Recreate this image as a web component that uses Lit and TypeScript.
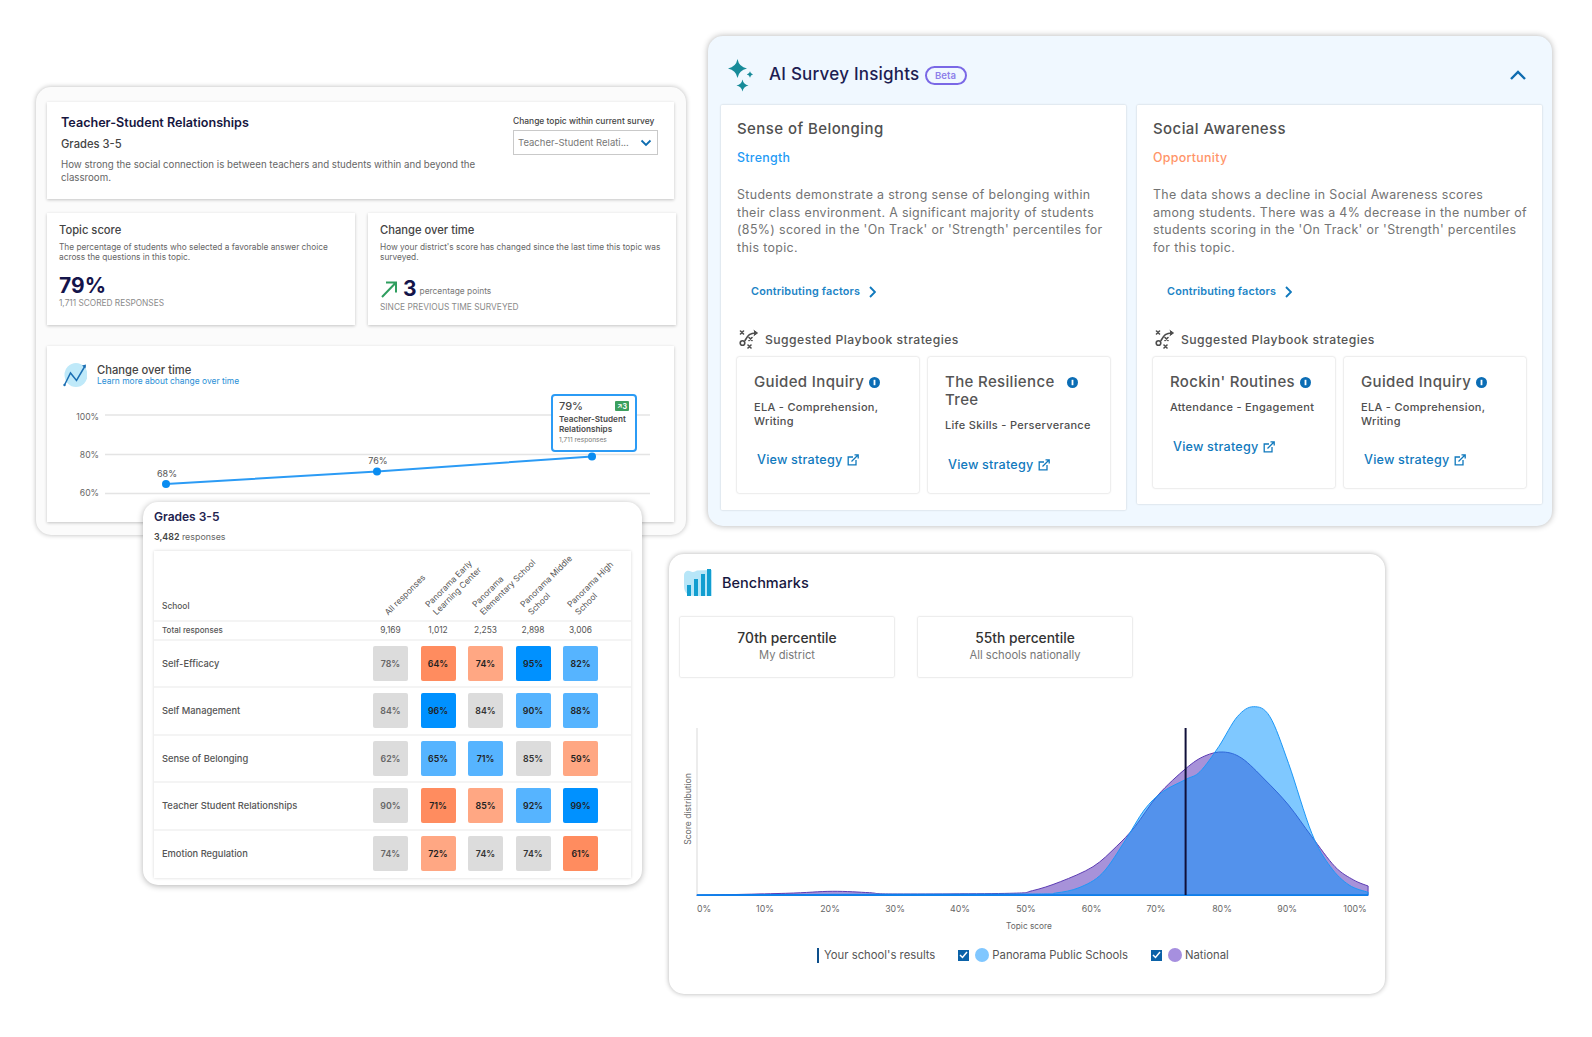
import { LitElement, html, css, svg } from "lit";
import { customElement } from "lit/decorators.js";

// Catmull-Rom smoothing of points into a cubic path
function smooth(pts: number[][]): string {
  let d = `M${pts[0][0]} ${pts[0][1]}`;
  for (let i = 0; i < pts.length - 1; i++) {
    const p0 = pts[Math.max(i - 1, 0)], p1 = pts[i], p2 = pts[i + 1], p3 = pts[Math.min(i + 2, pts.length - 1)];
    const c1x = p1[0] + (p2[0] - p0[0]) / 6, c1y = p1[1] + (p2[1] - p0[1]) / 6;
    const c2x = p2[0] - (p3[0] - p1[0]) / 6, c2y = p2[1] - (p3[1] - p1[1]) / 6;
    d += ` C${c1x.toFixed(1)} ${c1y.toFixed(1)} ${c2x.toFixed(1)} ${c2y.toFixed(1)} ${p2[0].toFixed(1)} ${p2[1].toFixed(1)}`;
  }
  return d;
}
const toPage = (a: number[][]) => a.map(([x, y]) => [660 + x / 2.148, 550 + y / 3]);
const bluePts = toPage([[79,1035],[400,1033],[800,1032],[850,1029],[900,1013],[950,970],[1000,870],[1040,780],[1080,725],[1130,688],[1160,665],[1200,590],[1240,500],[1275,470],[1310,500],[1350,640],[1400,850],[1440,950],[1480,1005],[1521,1027]]);
const purplePts = toPage([[79,1036],[270,1030],[370,1024],[450,1028],[500,1032],[750,1030],[800,1022],[860,995],[930,950],[980,890],[1020,830],[1070,735],[1130,655],[1170,618],[1210,606],[1250,625],[1300,690],[1350,765],[1400,860],[1450,950],[1490,990],[1521,1008]]);
const close = (d: string) => d + ` L1368 895.5 L697 895.5 Z`;

const star = (cx: number, cy: number, r: number) => {
  const k = r * 0.16;
  return `M${cx} ${cy - r}Q${cx + k} ${cy - k} ${cx + r} ${cy}Q${cx + k} ${cy + k} ${cx} ${cy + r}Q${cx - k} ${cy + k} ${cx - r} ${cy}Q${cx - k} ${cy - k} ${cx} ${cy - r}Z`;
};

const playbookIcon = html`<svg class="pb" width="20" height="20" viewBox="0 0 20 20" fill="none" stroke="#4d4d4d" stroke-width="1.6" stroke-linecap="round">
  <path d="M1.5 2l3 3M4.5 2l-3 3M10 8.5l3 3M13 8.5l-3 3M9 16l3 3M12 16l-3 3"/>
  <circle cx="3.5" cy="14" r="2.3"/>
  <path d="M6 11.5C9 6 11 4 17 4"/><path d="M15 1.5L18.5 4 15 6.5" fill="#4d4d4d" stroke-width="1"/>
</svg>`;
const extIcon = html`<svg class="ext" width="12" height="12" viewBox="0 0 12 12" fill="none" stroke="#1079bd" stroke-width="1.3">
  <path d="M6 3H1.2v7.8H9V6"/><path d="M4.5 7.5L11 1M7.5 .8h3.7v3.7"/>
</svg>`;
const infoIcon = html`<svg class="info" width="11" height="11" viewBox="0 0 11 11"><circle cx="5.5" cy="5.5" r="5.5" fill="#0b6db5"/><rect x="4.6" y="2.8" width="1.8" height="5.4" fill="#fff"/></svg>`;

type Strat = { t: string; sub: string; cls: string };
const panels = [
  { cls: "p1", title: "Sense of Belonging", tag: "Strength", tagCls: "strength",
    body: ["Students demonstrate a strong sense of belonging within", "their class environment. A significant majority of students", "(85%) scored in the 'On Track' or 'Strength' percentiles for", "this topic."],
    strats: [
      { t: "Guided Inquiry", sub: "ELA - Comprehension, Writing", cls: "" },
      { t: "The Resilience Tree", sub: "Life Skills - Perserverance", cls: "wide" },
    ] as Strat[] },
  { cls: "p2", title: "Social Awareness", tag: "Opportunity", tagCls: "opp",
    body: ["The data shows a decline in Social Awareness scores", "among students. There was a 4% decrease in the number of", "students scoring in the 'On Track' or 'Strength' percentiles", "for this topic."],
    strats: [
      { t: "Rockin' Routines", sub: "Attendance - Engagement", cls: "single" },
      { t: "Guided Inquiry", sub: "ELA - Comprehension, Writing", cls: "" },
    ] as Strat[] },
];

const heads: string[][] = [["All responses"], ["Panorama Early", "Learning Center"], ["Panorama", "Elementary School"], ["Panorama Middle", "School"], ["Panorama High", "School"]];
const totals = ["9,169", "1,012", "2,253", "2,898", "3,006"];
// f first-column grey, g grey, o strong orange, l light orange, b strong blue, s soft blue
const rows: { n: string; c: [string, string][] }[] = [
  { n: "Self-Efficacy", c: [["78%","f"],["64%","o"],["74%","l"],["95%","b"],["82%","s"]] },
  { n: "Self Management", c: [["84%","f"],["96%","b"],["84%","g"],["90%","s"],["88%","s"]] },
  { n: "Sense of Belonging", c: [["62%","f"],["65%","s"],["71%","s"],["85%","g"],["59%","l"]] },
  { n: "Teacher Student Relationships", c: [["90%","f"],["71%","o"],["85%","l"],["92%","s"],["99%","b"]] },
  { n: "Emotion Regulation", c: [["74%","f"],["72%","l"],["74%","g"],["74%","g"],["61%","o"]] },
];

const xTicks: [string, number][] = [["0%",704],["10%",765],["20%",830],["30%",895],["40%",960],["50%",1026],["60%",1091.5],["70%",1156],["80%",1222],["90%",1287],["100%",1355]];

@customElement("app-root")
export class AppRoot extends LitElement {
  static styles = css`
    :host { display: block; position: relative; width: 1592px; height: 1037px; background: #fff; overflow: hidden;
      font-family: Inter, "Liberation Sans", sans-serif; color: #4d4d4d; }
    * { box-sizing: border-box; }
    svg { display: block; flex: none; }
    svg text { font-family: Inter, "Liberation Sans", sans-serif; }
    .win { position: absolute; border-radius: 15px; }

    /* Topic window */
    .topic { left: 36px; top: 87px; width: 650px; height: 448px; background: #fbfbfb; z-index: 1;
      box-shadow: 0 0 5px rgba(0,0,0,.28); padding: 15px 10px 13px 11px; display: flex; flex-direction: column; }
    .sheet { background: #fff; box-shadow: 0 1px 3px rgba(0,0,0,.22); }
    .hd { width: 627px; height: 97px; padding: 13px 16px 0 14px; display: flex; justify-content: space-between; }
    .hd-l { width: 425px; }
    .hd h2 { margin: 0; font-size: 12.6px; line-height: 15px; font-weight: 600; color: #17173f; }
    .hd h3 { margin: 6.5px 0 0; font-size: 11.2px; line-height: 15px; font-weight: 500; color: #444; }
    .hd p { margin: 6px 0 0; font-size: 9.7px; line-height: 13px; color: #666; }
    .hd-r { width: 145px; }
    .hd-r label { display: block; font-size: 8.45px; line-height: 12px; font-weight: 500; color: #444; white-space: nowrap; }
    .sel { margin-top: 3px; height: 25px; border: 1px solid #c9c9c9; display: flex; align-items: center; justify-content: space-between;
      padding: 0 5px 0 4px; font-size: 9.5px; color: #777; white-space: nowrap; }
    .duo { display: grid; grid-template-columns: 308px 308px; column-gap: 13px; margin-top: 14px; }
    .stat { height: 112px; padding: 10px 12px 0 12px; }
    .stat h4 { margin: 0; font-size: 11.2px; line-height: 14px; font-weight: 500; color: #444; }
    .stat p { margin: 5px 0 0; font-size: 8.3px; line-height: 10px; color: #666; }
    .big { margin-top: 11px; font-size: 21px; line-height: 25px; font-weight: 700; color: #14144a; }
    .cap { font-size: 8.3px; line-height: 11px; color: #8a8a8a; margin-top: 0; white-space: nowrap; }
    .delta { margin-top: 15.5px; display: flex; align-items: center; height: 24px; }
    .delta b { font-size: 21px; font-weight: 700; color: #14144a; margin-left: 5px; line-height: 24px; }
    .delta span { font-size: 8.4px; color: #777; margin: 3px 0 0 3px; }
    .delta + .cap { margin-top: 1px; font-size: 8.4px; }
    .trend { position: relative; width: 627px; height: 177px; margin-top: 21px; overflow: hidden; }
    .trend-h { display: flex; align-items: center; gap: 10px; padding: 16px 0 0 16px; height: 43px; margin-bottom: 1px; }
    .trend-h div { font-size: 11.2px; line-height: 12px; font-weight: 500; color: #444; }
    .trend-h a { display: block; font-size: 8.45px; line-height: 11px; font-weight: 400; color: #2a8fd6; }
    .tip { position: absolute; left: 504px; top: 48px; width: 86px; height: 58px; background: #fff; border: 2px solid #2b9bf5; border-radius: 4px;
      padding: 4px 6px; font-size: 8.2px; line-height: 10px; font-weight: 600; color: #4a4a4a; }
    .tip-t { display: flex; justify-content: space-between; align-items: center; font-size: 11px; font-weight: 500; line-height: 13px; margin-bottom: 1px; }
    .tip-b { display: flex; align-items: center; gap: 1px; height: 10px; padding: 0 2px; background: #3c9f5e; color: #fff; border-radius: 1px; font-size: 7px; font-weight: 700; }
    .tip small { display: block; font-size: 6.6px; font-weight: 400; color: #777; margin-top: 1px; line-height: 10px; }

    /* AI window */
    .ai { left: 708px; top: 36px; width: 844px; height: 490px; background: #f0f8ff; box-shadow: 0 0 6px rgba(0,0,0,.3); }
    .ai-h { height: 69px; display: flex; align-items: center; padding: 9px 26px 0 20px; }
    .ai-h h1 { margin: -2px 0 0 16px; font-size: 17px; font-weight: 500; letter-spacing: .22px; color: #1d1d52; white-space: nowrap; }
    .beta { margin-left: 5px; width: 42px; height: 19px; border: 2px solid #7a68e6; border-radius: 10px; font-size: 9.6px; font-weight: 600;
      color: #8e80ea; display: flex; align-items: center; justify-content: center; }
    .chev-up { margin-left: auto; }
    .panels { display: flex; align-items: flex-start; gap: 11px; padding-left: 13px; }
    .panel { width: 405px; background: #fff; box-shadow: 0 0 2px rgba(0,0,0,.22); padding: 15px 16px 0; border-radius: 1px; }
    .p1 { height: 405px; } .p2 { height: 399px; }
    .panel h3 { margin: 0; font-size: 15px; line-height: 18px; font-weight: 500; letter-spacing: .42px; color: #505050; }
    .tag { margin-top: 13px; font-size: 12.4px; line-height: 14px; font-weight: 500; letter-spacing: .3px; }
    .strength { color: #1f9bf5; } .opp { color: #ff9469; }
    .body { margin: 21px 0 0; font-size: 12.4px; line-height: 17.5px; letter-spacing: .35px; color: #737373; white-space: nowrap; }
    .cf { display: flex; align-items: center; gap: 9px; margin: 29px 0 0 14px; font-size: 10.8px; line-height: 14px; letter-spacing: .2px; font-weight: 600; color: #1c84c6; }
    .sg { display: flex; align-items: center; gap: 6px; margin: 30px 0 0 2px; height: 20px; font-size: 12.2px; font-weight: 500; letter-spacing: .45px; color: #555; }
    .strats { display: grid; grid-template-columns: 182px 182px; column-gap: 9px; margin-top: 8px; }
    .strat { background: #fff; box-shadow: 0 0 2px rgba(0,0,0,.25); padding: 16px 8px 0 17px; border-radius: 2px; }
    .p1 .strat { height: 136px; } .p2 .strat { height: 131px; }
    .st { display: flex; align-items: flex-start; gap: 5px; font-size: 15px; line-height: 18px; font-weight: 500; letter-spacing: .35px; color: #555; }
    .st .info { margin-top: 4px; }
    .wide .st span { width: 117px; }
    .ss { margin-top: 10px; font-size: 11px; line-height: 13.6px; font-weight: 500; letter-spacing: .3px; color: #4f4f4f; }
    .vs { display: flex; align-items: center; gap: 5px; margin: 24px 0 0 3px; font-size: 12.6px; line-height: 16px; font-weight: 500; letter-spacing: .2px; color: #1079bd; }

    /* Table window */
    .grades { left: 143px; top: 502px; width: 499px; height: 383px; background: #fff; z-index: 2; box-shadow: 0 1px 6px rgba(0,0,0,.3); padding: 7px 11px 0; }
    .grades h2 { margin: 0; font-size: 12px; line-height: 16px; font-weight: 600; color: #23234f; }
    .resp { margin-top: 5px; font-size: 8.9px; line-height: 13px; color: #666; } .resp b { font-weight: 600; color: #444; }
    .tbl { margin-top: 8px; width: 477px; height: 327px; box-shadow: 0 0 3px rgba(0,0,0,.16); }
    .row { display: flex; align-items: center; gap: 12.5px; padding-left: 8px; border-bottom: 2px solid #f4f4f4; }
    .row > :first-child { width: 198.5px; font-size: 9.3px; font-weight: 500; color: #555; white-space: nowrap; }
    .row > .c { width: 35px; flex: none; }
    .hrow { height: 71px; align-items: flex-end; }
    .hrow > :first-child { padding-bottom: 9px; font-size: 8.4px; }
    .hcell { position: relative; height: 100%; }
    .rot { position: absolute; left: 17px; bottom: 3px; transform-origin: left bottom; transform: rotate(-45deg); white-space: nowrap;
      font-size: 8.4px; line-height: 10.5px; color: #555; }
    .trow { height: 18.5px; }
    .trow > :first-child { font-size: 8px; }
    .trow .c { text-align: center; font-size: 8.4px; color: #555; }
    .drow { height: 47.5px; }
    .drow:last-child { border-bottom-color: transparent; }
    .cell { height: 35px; border-radius: 2px; display: flex; align-items: center; justify-content: center; font-size: 8.8px; font-weight: 600; color: #222; }
    .f { background: #dcdcdc; color: #666; } .g { background: #dcdcdc; color: #333; }
    .o { background: #ff8c5f; } .l { background: #ffa783; } .b { background: #0091ff; } .s { background: #56b4ff; }

    /* Benchmark window */
    .bench { left: 669px; top: 554px; width: 716px; height: 440px; background: #fff; box-shadow: 0 0 5px rgba(0,0,0,.3); padding: 15px 0 0 11px; }
    .bh { display: flex; align-items: center; gap: 9px; height: 27px; padding-left: 3px; font-size: 14.5px; font-weight: 500; color: #17173f; }
    .pcts { display: flex; gap: 24px; margin-top: 21px; }
    .pct { width: 214px; height: 60px; box-shadow: 0 0 2px rgba(0,0,0,.28); display: flex; flex-direction: column; align-items: center; padding-top: 13px; border-radius: 1px; }
    .pct b { font-size: 13.8px; line-height: 16px; font-weight: 500; color: #333; }
    .pct span { font-size: 11.2px; line-height: 14px; margin-top: 2px; color: #777; }
    .dist { margin: 23px 0 0 -11px; }
    .legend { display: flex; align-items: center; height: 16px; margin: 12px 0 0 137px; font-size: 11.3px; color: #555; white-space: nowrap; }
    .bar { width: 2px; height: 15px; background: #0d4f8b; margin-right: 5px; }
    .chk { width: 11px; height: 11px; background: #0b62a8; margin-left: 23px; display: flex; align-items: center; justify-content: center; }
    .dot { width: 14px; height: 14px; border-radius: 50%; margin: 0 3px 0 6px; }
  `;

  render() {
    return html`
      <section class="win topic">
        <div class="sheet hd">
          <div class="hd-l">
            <h2>Teacher-Student Relationships</h2>
            <h3>Grades 3-5</h3>
            <p>How strong the social connection is between teachers and students within and beyond the classroom.</p>
          </div>
          <div class="hd-r">
            <label>Change topic within current survey</label>
            <div class="sel"><span>Teacher-Student Relati...</span>
              <svg width="12" height="8" viewBox="0 0 12 8" fill="none" stroke="#0d6cb0" stroke-width="1.8"><path d="M1.5 1.5L6 6l4.5-4.5"/></svg></div>
          </div>
        </div>
        <div class="duo">
          <div class="sheet stat">
            <h4>Topic score</h4>
            <p>The percentage of students who selected a favorable answer choice<br>across the questions in this topic.</p>
            <div class="big">79%</div>
            <div class="cap">1,711 SCORED RESPONSES</div>
          </div>
          <div class="sheet stat">
            <h4>Change over time</h4>
            <p>How your district's score has changed since the last time this topic was surveyed.</p>
            <div class="delta">
              <svg width="18" height="18" viewBox="0 0 18 18" fill="none" stroke="#2f9e5f" stroke-width="2"><path d="M2 17L15.5 3M6 2.5h10v10"/></svg>
              <b>3</b><span>percentage points</span>
            </div>
            <div class="cap">SINCE PREVIOUS TIME SURVEYED</div>
          </div>
        </div>
        <div class="sheet trend">
          <div class="trend-h">
            <svg width="24" height="24" viewBox="0 0 24 24" fill="none"><ellipse cx="13" cy="12" rx="11.5" ry="12" fill="#bfe9f9"/>
              <path d="M1.5 22L7.5 10l6 7.5L22 3" stroke="#1b6fb3" stroke-width="1.5"/><path d="M19 2.5l4-1-.5 4z" fill="#1b6fb3"/><circle cx="1.5" cy="22" r="1.2" fill="#1b6fb3"/></svg>
            <div>Change over time<a>Learn more about change over time</a></div>
          </div>
          <svg width="627" height="133" viewBox="47 389 627 133">
            ${[414, 453.5, 492.5].map((y) => svg`<line x1="105" x2="650" y1=${y} y2=${y} stroke="#e4e4e4" stroke-width="1.5"/>`)}
            ${[["100%", 418.5], ["80%", 457], ["60%", 494.5]].map(([t, y]) => svg`<text x="99" y=${y} text-anchor="end" font-size="8.6" fill="#666">${t}</text>`)}
            <path d="M166 483L377 470.5L592 455.5" fill="none" stroke="#2b9bf5" stroke-width="2"/>
            ${[[166, 483], [377, 470.5], [592, 455.5]].map(([x, y]) => svg`<circle cx=${x} cy=${y} r="4" fill="#0a8cf0"/>`)}
            <text x="167" y="476" text-anchor="middle" font-size="9" fill="#555">68%</text>
            <text x="378" y="463" text-anchor="middle" font-size="9" fill="#555">76%</text>
          </svg>
          <div class="tip">
            <div class="tip-t"><span>79%</span><span class="tip-b">↗3</span></div>
            Teacher-Student<br>Relationships
            <small>1,711 responses</small>
          </div>
        </div>
      </section>

      <section class="win ai">
        <header class="ai-h">
          <svg width="25" height="33" viewBox="0 0 25 33" fill="#178b99"><path d=${star(9.5, 9.5, 9.5)}/><path d=${star(22, 15.5, 3.2)}/><path d=${star(14.5, 26.5, 6)}/></svg>
          <h1>AI Survey Insights</h1>
          <span class="beta">Beta</span>
          <svg class="chev-up" width="16" height="10" viewBox="0 0 16 10" fill="none" stroke="#0e6cb0" stroke-width="2.4"><path d="M1 9l7-7 7 7"/></svg>
        </header>
        <div class="panels">
          ${panels.map((p) => html`
            <article class="panel ${p.cls}">
              <h3>${p.title}</h3>
              <div class="tag ${p.tagCls}">${p.tag}</div>
              <p class="body">${p.body.map((l, i) => html`${i ? html`<br>` : ""}${l}`)}</p>
              <div class="cf">Contributing factors
                <svg width="7" height="12" viewBox="0 0 7 12" fill="none" stroke="#1079bd" stroke-width="1.9"><path d="M1 1l5 5-5 5"/></svg></div>
              <div class="sg">${playbookIcon}Suggested Playbook strategies</div>
              <div class="strats">
                ${p.strats.map((s) => html`
                  <div class="strat ${s.cls}">
                    <div class="st"><span>${s.t}</span>${infoIcon}</div>
                    <div class="ss">${s.sub}</div>
                    <div class="vs">View strategy ${extIcon}</div>
                  </div>`)}
              </div>
            </article>`)}
        </div>
      </section>

      <section class="win grades">
        <h2>Grades 3-5</h2>
        <div class="resp"><b>3,482</b> responses</div>
        <div class="tbl">
          <div class="row hrow"><div>School</div>
            ${heads.map((h) => html`<div class="c hcell"><div class="rot">${h.map((l, i) => html`${i ? html`<br>` : ""}${l}`)}</div></div>`)}</div>
          <div class="row trow"><div>Total responses</div>${totals.map((t) => html`<div class="c">${t}</div>`)}</div>
          ${rows.map((r) => html`<div class="row drow"><div>${r.n}</div>
            ${r.c.map(([v, k]) => html`<div class="c cell ${k}">${v}</div>`)}</div>`)}
        </div>
      </section>

      <section class="win bench">
        <div class="bh">
          <svg width="30" height="28" viewBox="0 0 30 28"><path d="M1 7C1 2 5 1 8 2.5C11 4 12 2 14 1.5L29 1V27H13C5 27 1 24 1 17Z" fill="#b7e6f8"/>
            <g fill="#129ed0"><rect x="4" y="16" width="4" height="11"/><rect x="11" y="10" width="4" height="17"/><rect x="18" y="5" width="4" height="22"/><rect x="24" y="0" width="4" height="27"/></g></svg>
          Benchmarks
        </div>
        <div class="pcts">
          <div class="pct"><b>70th percentile</b><span>My district</span></div>
          <div class="pct"><b>55th percentile</b><span>All schools nationally</span></div>
        </div>
        <svg class="dist" width="716" height="235" viewBox="669 700 716 235">
          <line x1="697" x2="697" y1="728" y2="895" stroke="#d9d9d9" stroke-width="1"/>
          <path d=${close(smooth(purplePts))} fill="rgba(79,38,180,.5)" stroke="#5b3bb3" stroke-width="1"/>
          <path d=${close(smooth(bluePts))} fill="rgba(0,145,255,.5)" stroke="#1c98f7" stroke-width="1"/>
          <line x1="697" x2="1368" y1="895" y2="895" stroke="#0a78e8" stroke-width="1.6"/>
          <line x1="1185.6" x2="1185.6" y1="728" y2="895" stroke="#10103a" stroke-width="2"/>
          ${xTicks.map(([t, x]) => svg`<text x=${x} y="912" text-anchor="middle" font-size="8.8" fill="#666">${t}</text>`)}
          <text x="1029" y="929" text-anchor="middle" font-size="8.3" fill="#666">Topic score</text>
          <text transform="translate(691 809) rotate(-90)" text-anchor="middle" font-size="8.6" fill="#666">Score distribution</text>
        </svg>
        <div class="legend">
          <i class="bar"></i>Your school's results
          <span class="chk"><svg width="9" height="8" viewBox="0 0 9 8" fill="none" stroke="#fff" stroke-width="1.5"><path d="M1 4l2.5 2.5L8 1"/></svg></span>
          <i class="dot" style="background:#80c7ff"></i>Panorama Public Schools
          <span class="chk"><svg width="9" height="8" viewBox="0 0 9 8" fill="none" stroke="#fff" stroke-width="1.5"><path d="M1 4l2.5 2.5L8 1"/></svg></span>
          <i class="dot" style="background:#a68fdf"></i>National
        </div>
      </section>
    `;
  }
}
